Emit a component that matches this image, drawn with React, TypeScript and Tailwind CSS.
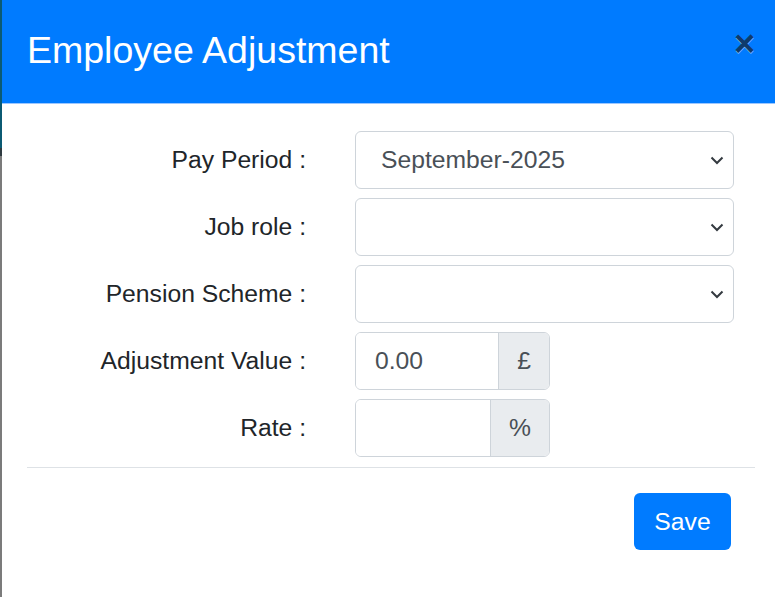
import React from "react";

const font = { fontFamily: '"Liberation Sans", Arial, sans-serif' };

function Chevron() {
  return (
    <svg width="14" height="9" viewBox="0 0 14 9" aria-hidden="true">
      <polyline points="1.5,1.5 7,7 12.5,1.5" fill="none" stroke="#343a40" strokeWidth="2" />
    </svg>
  );
}

function SelectBox({ value }: { value?: string }) {
  return (
    <div className="ml-[49px] flex h-[58px] w-[379px] items-center justify-between rounded-[6px] border border-[#ced4da] bg-white pl-[25px] pr-[9px] text-[24.7px] text-[#495057]">
      <span>{value ?? ""}</span>
      <Chevron />
    </div>
  );
}

function InputGroup({ value, addon, addonWidth }: { value?: string; addon: string; addonWidth: string }) {
  return (
    <div className="ml-[49px] flex h-[58px] w-[195px] overflow-hidden rounded-[6px] border border-[#ced4da] text-[24.7px] text-[#495057]">
      <div className="flex flex-1 items-center bg-white pl-[19px]">{value ?? ""}</div>
      <div className={`flex items-center justify-center border-l border-[#ced4da] bg-[#e9ecef] ${addonWidth}`}>{addon}</div>
    </div>
  );
}

function Row({ label, children }: { label: string; children: React.ReactNode }) {
  return (
    <div className="flex items-center">
      <label className="w-[304px] text-right text-[24.7px] text-[#212529]">{label}</label>
      {children}
    </div>
  );
}

export default function App() {
  return (
    <div className="flex h-[597px] w-[775px] overflow-hidden" style={font}>
      <div className="w-[2px] bg-[linear-gradient(to_bottom,#0b5a73_0px,#0b5a73_148px,#2f3b40_148px,#2f3b40_156px,#7b7b7b_156px)]" />
      <div className="flex flex-1 flex-col bg-white">
        <div className="flex h-[104px] items-start justify-between border-b border-[#9cc7ff] bg-[#007bff] pl-[25px] pr-[20px]">
          <h4 className="mt-[32px] text-[37.5px] leading-none text-white">Employee Adjustment</h4>
          <span className="mt-[26px] text-[36px] font-bold leading-none text-[#0f3b6b] [text-shadow:0_1px_0_rgba(255,255,255,0.5)]">×</span>
        </div>
        <div className="flex flex-col gap-[9px] pt-[27px]">
          <Row label="Pay Period :">
            <SelectBox value="September-2025" />
          </Row>
          <Row label="Job role :">
            <SelectBox />
          </Row>
          <Row label="Pension Scheme :">
            <SelectBox />
          </Row>
          <Row label="Adjustment Value :">
            <InputGroup value="0.00" addon="£" addonWidth="w-[51px]" />
          </Row>
          <Row label="Rate :">
            <InputGroup addon="%" addonWidth="w-[59px]" />
          </Row>
        </div>
        <div className="ml-[25px] mr-[20px] mt-[10px] border-t border-[#dee2e6]" />
        <div className="flex justify-end pr-[44px] pt-[25px]">
          <button className="h-[57px] w-[97px] rounded-[6px] bg-[#007bff] text-[24.7px] text-white">Save</button>
        </div>
      </div>
    </div>
  );
}
